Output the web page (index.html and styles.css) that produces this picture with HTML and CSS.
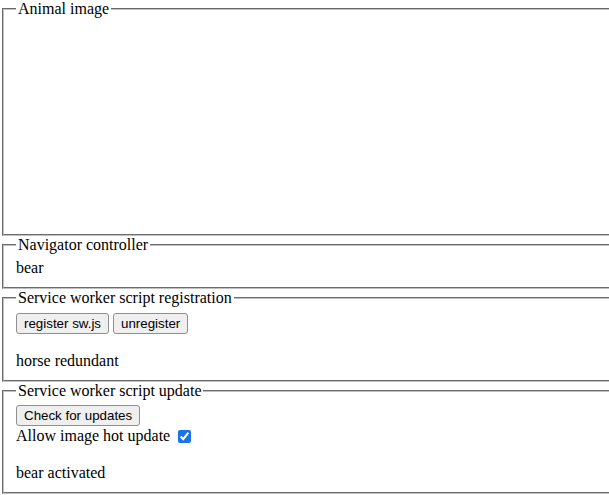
FILE: index.html
```html
<!DOCTYPE html>
<html>
<head>
<meta charset="utf-8">
<link rel="stylesheet" href="styles.css">
</head>
<body>
<div class="page">
  <fieldset class="box">
    <legend>Animal image</legend>
    <div class="image-area"></div>
  </fieldset>
  <fieldset class="box">
    <legend>Navigator controller</legend>
    <div>bear</div>
  </fieldset>
  <fieldset class="box">
    <legend>Service worker script registration</legend>
    <div class="row"><button class="btn">register sw.js</button> <button class="btn">unregister</button></div>
    <div class="spacer"></div>
    <div>horse redundant</div>
  </fieldset>
  <fieldset class="box">
    <legend>Service worker script update</legend>
    <div class="row"><button class="btn">Check for updates</button></div>
    <label class="check-row">Allow image hot update <input type="checkbox" class="check" checked></label>
    <div class="spacer"></div>
    <div>bear activated</div>
  </fieldset>
</div>
</body>
</html>
```
FILE: styles.css
```css
html, body {
  margin: 0;
  padding: 0;
  overflow: hidden;
}
body {
  font-family: "Liberation Serif", "Times New Roman", serif;
  font-size: 16px;
  color: #000;
  background: #fff;
}
.page {
  width: 640px;
}
.box {
  margin: 0 2px;
  padding: 0.35em 0.75em 0.625em;
  border: 2px groove #c0c0c0;
}
.box legend {
  padding: 0 2px;
}
.image-area {
  height: 200px;
}
.row {
  display: flex;
  gap: 4px;
}
.btn {
  font-family: "Liberation Sans", Arial, sans-serif;
  font-size: 13.33px;
  padding: 1px 7px;
  height: 21px;
  border: 1px solid #8f8f8f;
  border-radius: 3px;
  background: #efefef;
  color: #000;
}
.spacer {
  height: 18px;
}
.check-row {
  display: flex;
  align-items: center;
  height: 20px;
}
.check {
  margin: 0 0 0 8px;
  width: 13px;
  height: 13px;
  accent-color: #1a73e8;
}
```
